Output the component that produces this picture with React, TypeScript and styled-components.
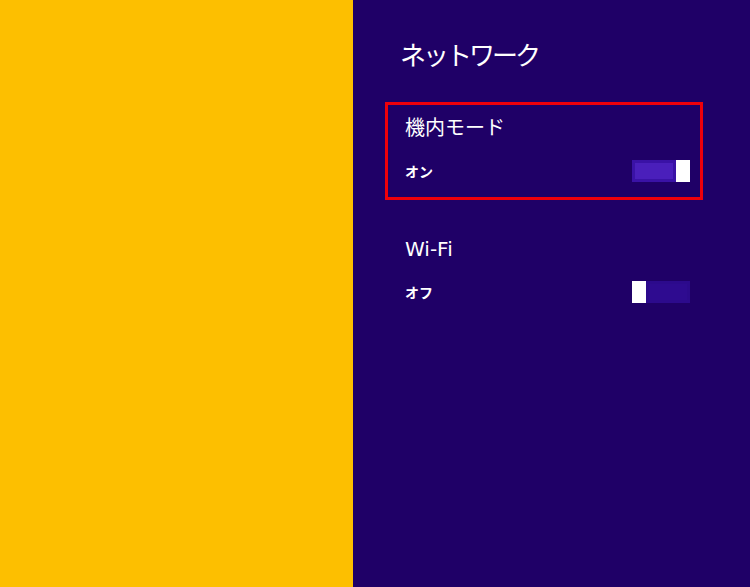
import styled, { createGlobalStyle } from "styled-components";

const GlobalStyle = createGlobalStyle`
  html, body {
    margin: 0;
    padding: 0;
  }
  body {
    font-family: "DejaVu Sans", "Noto Sans CJK JP", sans-serif;
  }
`;

type Setting = {
  title: string;
  on: boolean;
  highlighted?: boolean;
};

const settings: Setting[] = [
  { title: "機内モード", on: true, highlighted: true },
  { title: "Wi-Fi", on: false },
];

const App = (): JSX.Element => {
  return (
    <Screen>
      <GlobalStyle />
      <Backdrop />
      <Charm>
        <Heading>ネットワーク</Heading>
        <SectionList>
          {settings.map((s) => (
            <Section key={s.title} $highlighted={!!s.highlighted}>
              <SectionTitle>{s.title}</SectionTitle>
              <ToggleRow>
                <State>{s.on ? "オン" : "オフ"}</State>
                <Toggle $on={s.on}>
                  <Track $on={s.on} />
                  <Thumb />
                </Toggle>
              </ToggleRow>
            </Section>
          ))}
        </SectionList>
      </Charm>
    </Screen>
  );
};

export default App;

const Screen = styled.div`
  width: 750px;
  height: 587px;
  display: flex;
  overflow: hidden;
`;

const Backdrop = styled.div`
  width: 353px;
  flex-shrink: 0;
  background: #fdbf00;
`;

const Charm = styled.div`
  flex: 1;
  background: #1f0067;
  color: #fff;
  padding: 36px 47px 0 32px;
  display: flex;
  flex-direction: column;
`;

const Heading = styled.h1`
  margin: 0 0 0 15px;
  font-family: "Noto Sans CJK JP", sans-serif;
  font-size: 26px;
  line-height: 36px;
  font-weight: 400;
  letter-spacing: -3px;
`;

const SectionList = styled.div`
  margin-top: 30px;
  display: flex;
  flex-direction: column;
  gap: 23px;
`;

const Section = styled.div<{ $highlighted: boolean }>`
  border: 3px solid ${(p) => (p.$highlighted ? "#f0000a" : "transparent")};
  padding: 9px 10px 15px 17px;
  display: flex;
  flex-direction: column;
  gap: 18px;
`;

const SectionTitle = styled.div`
  font-size: 20px;
  line-height: 28px;
  font-weight: 400;
`;

const ToggleRow = styled.div`
  display: flex;
  align-items: center;
  justify-content: space-between;
`;

const State = styled.div`
  font-family: "Noto Sans CJK JP", sans-serif;
  font-size: 14px;
  font-weight: 700;
  line-height: 20px;
`;

const Toggle = styled.div<{ $on: boolean }>`
  width: 58px;
  height: 22px;
  display: flex;
  flex-direction: ${(p) => (p.$on ? "row" : "row-reverse")};
`;

const Track = styled.div<{ $on: boolean }>`
  flex: 1;
  box-sizing: border-box;
  border: 3px solid ${(p) => (p.$on ? "#3a12a6" : "#2c0a8c")};
  background: ${(p) => (p.$on ? "#4a1fbb" : "#2e0b90")};
`;

const Thumb = styled.div`
  width: 14px;
  background: #ffffff;
`;
